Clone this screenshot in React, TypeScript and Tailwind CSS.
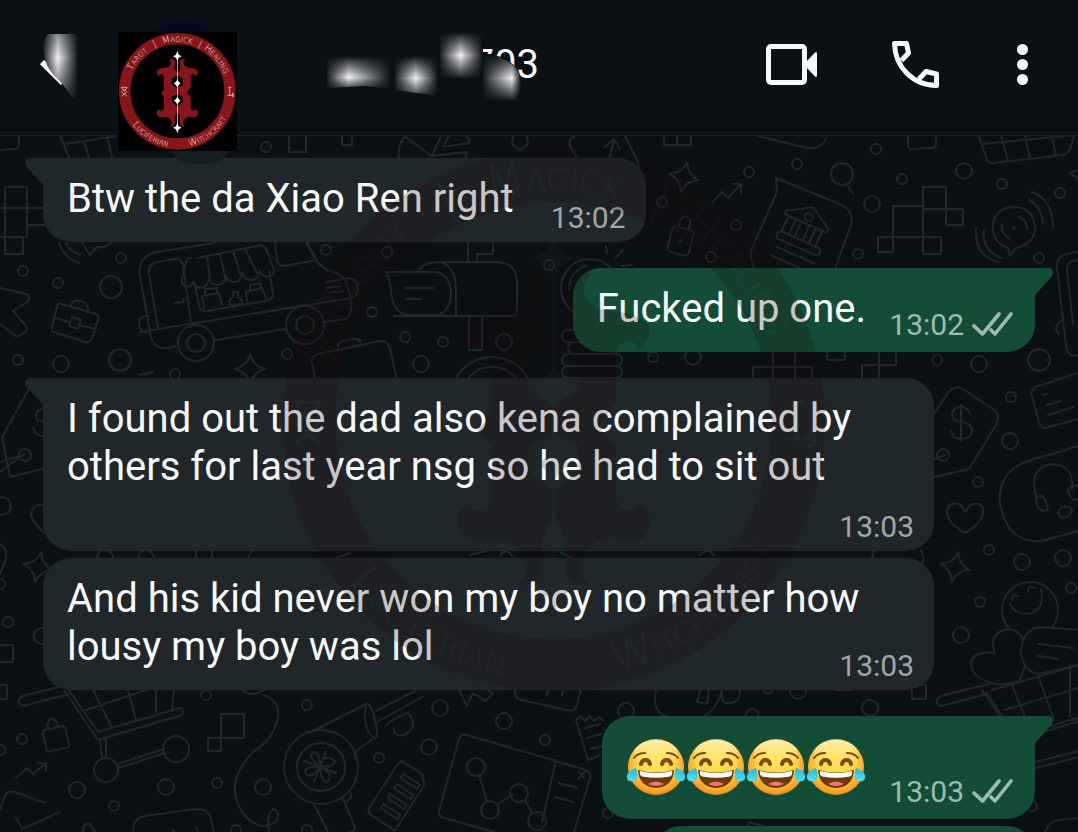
import type { ReactNode } from "react";

type Message = {
  id: number;
  text?: string;
  laughs?: number;
  time: string;
  sent?: boolean;
  tail?: boolean;
  spacing: string;
  room: string;
};

const messages: Message[] = [
  { id: 1, text: "Btw the da Xiao Ren right", time: "13:02", tail: true, spacing: "", room: "pr-28 pb-3" },
  { id: 2, text: "Fucked up one.", time: "13:02", sent: true, tail: true, spacing: "mt-[26px]", room: "pr-[147px] pb-3" },
  {
    id: 3,
    text: "I found out the dad also kena complained by others for last year nsg so he had to sit out",
    time: "13:03",
    tail: true,
    spacing: "mt-[26px]",
    room: "pb-[53px]",
  },
  {
    id: 4,
    text: "And his kid never won my boy no matter how lousy my boy was lol",
    time: "13:03",
    spacing: "mt-[7px]",
    room: "pb-3",
  },
  { id: 5, laughs: 4, time: "13:03", sent: true, tail: true, spacing: "mt-[26px]", room: "pr-[147px] pb-3" },
];

// x, y, radius
const dots = [
  [266, 147, 5], [121, 258, 5], [23, 271, 5], [58, 283, 5], [111, 287, 11], [18, 360, 5], [61, 364, 8],
  [120, 360, 11], [175, 374, 5], [287, 354, 5], [326, 250, 5], [387, 252, 5], [372, 312, 5], [405, 337, 5],
  [443, 342, 5], [421, 364, 8], [504, 342, 8], [520, 141, 8], [749, 172, 5], [797, 164, 5], [662, 202, 5],
  [736, 225, 5], [711, 257, 5], [876, 149, 5], [902, 179, 5], [964, 171, 8], [1002, 184, 5], [1060, 193, 5],
  [872, 204, 8], [858, 254, 5], [1039, 258, 5], [937, 360, 5], [979, 364, 8], [1039, 360, 11], [549, 265, 5],
  [653, 357, 5], [693, 357, 8], [1011, 397, 5], [1010, 441, 8], [978, 482, 5], [989, 550, 5], [1022, 562, 8],
  [1063, 558, 8], [1071, 588, 5], [980, 602, 5], [961, 635, 8], [870, 708, 8], [2, 506, 9], [8, 622, 5],
  [0, 584, 5], [42, 636, 8], [206, 695, 5], [307, 705, 5], [22, 739, 5], [77, 790, 8], [114, 806, 5],
  [166, 787, 8], [217, 783, 5], [263, 787, 8], [379, 758, 5], [429, 747, 8], [440, 708, 8], [504, 721, 8],
  [545, 740, 5], [626, 711, 8], [608, 813, 5], [798, 691, 8], [768, 690, 4], [1032, 806, 5], [0, 750, 5],
  [105, 558, 8], [146, 558, 8], [307, 830, 5], [236, 830, 5],
];

const sparkles = [
  "translate(250 369)",
  "translate(684 177) rotate(12)",
  "translate(955 567) rotate(12)",
  "translate(38 567) rotate(12)",
];

function Doodles() {
  return (
    <svg
      className="absolute inset-0 h-full w-full"
      viewBox="0 136 1078 696"
      preserveAspectRatio="xMidYMin slice"
      fill="none"
      stroke="#20262a"
      strokeWidth="2"
      strokeLinecap="round"
      strokeLinejoin="round"
      aria-hidden="true"
    >
      {dots.map(([x, y, r]) => (
        <circle key={`${x}-${y}`} cx={x} cy={y} r={r} />
      ))}
      {sparkles.map(t => (
        <path key={t} transform={t} d="M0-15Q3-3 15 0Q3 3 0 15Q-3 3-15 0Q-3-3 0-15Z" />
      ))}

      {/* top edge */}
      <path d="M19 136v8q0 5-6 5L0 150M60 136l10 23M64 144l54-8M84 142l5 16M107 137l5 20M137 136l5 15" />
      <path d="M289 136v16h17v-16M342 136v9h10v-9M399 158q-2-12 6-22M404 136l28 20 9-20M449 136l-6 11 26-4q2-4-3-7M432 156l34-4v6" />
      <path d="M574 136q-8 6-2 14l5 8M625 136l13 26q2 6-2 10M609 160l5-20M605 147l9-8 6 10M664 136v9h27v-9M677 136v9M758 136l50 12q14 2 18-10M908 136v9q0 4 4 4l20-1q4 0 4-5v-7" />
      <path d="M979 136l8 24q2 4 7 3l68-8q7-1 9-9l3-10M983 144l92-9M1001 136l7 25M1025 136l5 23M1052 136l4 20M1078 170l-9 3 9 5" />

      {/* pixel steps */}
      <path d="M5 187h22v50h-27M5 187v50M0 208h45v17H27M5 237v17h18v-17" />
      <path d="M923 187h23v22h-23zM893 206h30M893 206v31M946 209h17v16h-17zM878 237h15v15h-15zM893 237h48v17h-18v-45" />
      <path d="M753 383v-16h59v16M773 352v31M795 352v31M827 352v8h18v-8M862 378v-13h34v-12M879 352v25" />
      <path d="M221 714h23v24h-23zM208 738h13v13h-13zM0 645h13v17H0M0 685h7v14H0M912 685h14v14h-14zM835 690h16" />

      {/* food truck */}
      <path d="M215 243l-58 9q-20 4-17 24l10 56q2 18 18 16l9-2M215 340l71-11M325 322l21-3q7-4 5-21M140 332l211-34M308 243l8 16q4 9 17 13 12 3 15 16l3 10" />
      <path d="M158 328l-9-54q-1-10 8-12l18-3q7-1 8 7l8 56M174 303l8-1q2 0 2-4M148 316q-12 0-8 12 2 6 8 4M275 243l2 16q1 8 8 7l31-6-10-17" />
      <path d="M197 258l60-12q7-2 10 5l7 19q0 6-6 7-6 0-8-6-2 9-8 9-7 0-9-7-2 8-8 9-7 0-9-6-1 8-8 9-7 0-9-6-2 8-8 9-7 0-8-6-2 5-7 4-5-1-4-6l4-18q1-4 5-4M207 256l3 24M220 254l6 27M233 251l8 25M245 249l12 24M195 284l4 22q1 6 8 5l58-10q8-1 8-8l-4-22" />
      <path d="M204 308l-2-12 17-3 3 12M205 295v-6l12-1v5M230 305q-2-5 3-8v-5h5v5q6 3 4 7zM247 301l-1-9 16-4 4 10M250 290v-5l10-2 1 6M326 282l14-2M327 288l14-2M329 293l14-2M346 278q11 0 12 10 0 9-9 11" />
      <circle cx="196" cy="343" r="18" />
      <circle cx="196" cy="343" r="9" />
      <circle cx="305" cy="325" r="19" />
      <circle cx="305" cy="325" r="9" />

      {/* mailbox and cases */}
      <path d="M386 272h50c20 2 20 41 0 43h-28c-20-2-16-30-19-35zM406 288h27M406 299h16M419 270q5-8 20-8h58q20 1 20 20v29q0 5-5 5H394M440 262q16 4 16 28v26M469 316v34h13v-34M468 243v19M477 262v-8h16v-11" />
      <path d="M316 384l-4-22q-1-6 6-8l62-13q7-1 10 7l7 32M338 350v-5q1-4 10-5 12-4 13 4M58 303l38 11q4 2 2 6l-6 18q-2 5-6 4l-32-10q-3-1-2-5zM71 305q2-6 10-4 8 2 7 9M55 318l14 4M79 325l17 4M72 317l9 3-3 9-9-3z" />
      <path d="M0 288l26 6q6 3 1 8l-14 9 13 15q2 4-2 7l-7 4-17-13" />
      <circle cx="492" cy="398" r="41" />
      <circle cx="492" cy="398" r="31" />
      <path d="M59 243q4 14 20 20M66 243q4 9 14 11M82 243l8 12 7-8q9 1 14-4" />

      {/* bulb and stack of coins */}
      <circle cx="590" cy="288" r="29" />
      <path d="M569 290q0-18 17-24M606 246l1 8M623 250l-7 8M632 265l-10 1" />
      <rect x="562" y="330" width="50" height="12" rx="6" />
      <rect x="568" y="342" width="50" height="12" rx="6" />
      <rect x="562" y="354" width="60" height="12" rx="6" />
      <rect x="562" y="366" width="60" height="12" rx="6" />

      {/* lock, search, bank, signal */}
      <g transform="translate(681 239) rotate(14)">
        <rect x="-11" y="-11" width="22" height="26" rx="4" />
        <path d="M-5-11v-8q5-8 10 0v8" />
        <circle cy="2" r="1" />
      </g>
      <circle cx="842" cy="174" r="11" />
      <path d="M847 184l6 10M712 203l10-11 6 6 13-14M733 184h8v9" />
      <path d="M758 272q-10-10-6-24l25-56-1-14 66 27q12 6 9 20l-16 44" />
      <g transform="translate(803 230) rotate(24)">
        <path d="M-23-11L0-25 23-11v4h-46zM-19-7v17M-11-7v17M-5-7v17M4-7v17M11-7v17M18-7v17M-20 10h42q5 3 0 8h-42q-5-4 0-8zM-18 26h42M-18 36h42" />
        <circle cy="-14" r="4" />
      </g>
      <path d="M1008 248l2 8 6-8q19-4 19-21-2-20-21-20-21 1-21 21 0 14 15 20zM1002 224q-2 9 8 15M1019 217q8 3 8 12M984 230q-2 22 18 28M976 228q-2 28 22 34M1029 200q13 7 14 24M1032 192q21 8 21 36" />
      <circle cx="1014" cy="228" r="1" />
      <path d="M1078 252l-12 2q-10 2-9 14l9 78q2 12 12 9M1078 260q-12 1-11 10l6 54M1062 320q-10 8-3 14" />

      {/* price tag, note, headset */}
      <path d="M934 414l14-21q7-9 15-4l30 20q8 6 3 16l-27 44-35 8M934 459l11-4M970 414q-2-7-9-7-9 0-9 8 0 6 9 7 11 1 11 9 0 8-11 8-9 0-10-9M961 405v36" />
      <circle cx="943" cy="455" r="6" />
      <path d="M1078 373q-1 0-36 12-13 2-10 11l7 26q2 8 10 5l29-8M1042 395l5-1M1046 405l14-4M1048 415l25-8M1078 446l-53 16q-28 12-25 42 8 40 42 37l36-10" />
      <path d="M1037 498q-10-30 15-34 22 1 20 25M1036 498q6-6 10 4 4 9-2 9-7 0-8-13M1068 490q5-8 10-3M1068 490q3 12 10 9M1061 508q10-4 11 3-3 8-11 6-5-4 0-9" />
      <path d="M965 533q-18-10-18-22 3-11 14-6l4 7 5-7q13-4 13 6 0 12-18 22zM30 387L2 437l8 40 33-8M0 462l24-7M0 472l24-18M43 408q-10 4-6 12l6 2M33 428q3 8 10 8M43 505q-10-2-12 10 2 8 13 18" />
      <circle cx="25" cy="455" r="6" />
      <circle cx="1030" cy="610" r="28" />
      <path d="M1010 604q6 12 22 9 13-5 9-24M1012 600q0-7 6-4M1028 592q0-8 7-4" />
      <path
        fill="#0b1014"
        d="M997 684q-24-4-26-20 1-14 24-11-6-16 6-22 14-6 22 8 8 20-4 42-10 4-22 3z"
      />
      <path fill="#0b1014" d="M1082 630l-42-3q-18 3-19 25 2 20 18 22l43-10z" />
      <path d="M1039 644l34 4M1038 656l20 3" />
      <path d="M0 544q10 6 4 20l-4 10M140 375l13-3M196 550v8M212 550v8M248 558l4-8M872 558l2-8M921 550q4 8 1 14" />

      {/* shopping carts */}
      <path d="M75 683l-52 13q-6 3-4 7 3 4 8 2l42-11M64 690l34 50 84-25q2-6-2-7l-82 24-30-43M86 710l66-22M93 690l18 36M128 690l8 30M156 690v22M174 690l-2 20M100 740l2 18M106 738v20M118 768l47-15M117 764l47-15" />
      <circle cx="106" cy="770" r="12" />
      <circle cx="176" cy="749" r="13" />
      <g transform="translate(918 0)">
        <path d="M75 683l-52 13q-6 3-4 7 3 4 8 2l42-11M64 690l34 50 84-25M68 692l30 44 82-24M74 690l86-25M86 710l74-22M93 683l18 43M120 675l16 45M152 665v52M118 768l47-12M117 762l47-12" />
      </g>

      {/* bottom strip */}
      <g transform="translate(55 737) rotate(-12)">
        <rect x="-11" y="-9" width="23" height="22" rx="3" />
        <path d="M-5-9v-5q5-9 10 0v5" />
      </g>
      <path d="M16 778l11-10 6 6 13-11M37 763h9v8M0 810l5-14q2-6 10-4l30 11M16 817l6 12 38-17M83 832q0-10 7-8l5 8M133 832q0-14 12-16l50-7q14 0 16 10l3 13M172 830l2 2M196 827l2 5" />
      <path d="M242 690q8 8 22 0M264 695q22 8 10 34-6 14-20 22-34 34-8 66 14 14 28 6 8-8 0-14-8 2-5 22" />
      <path d="M313 731l53-27q6-2 11 26 1 10-3 8l-17 12q-3 4-2 9M366 704q-4 26 8 34M377 710l38-19M377 722l45-25M386 725q10-8 22-12 12 14-4 22-11 2-10-7M314 804l14 28M343 799l12 28q0 5-6 5M349 790q6 8-4 12" />
      <circle cx="321" cy="767" r="37" />
      <circle cx="321" cy="767" r="24" />
      <path d="M320 767q-14-12-6-15 6 1 6 15 2-14 14-7 4 6-14 7 14 6 8 14-7 3-8-14-8 12-14 7-4-8 14-7M304 761l32 12M326 751l-12 31" />
      <g transform="translate(399 795) rotate(33)">
        <path d="M-16-30h24l8 8v54h-28q-6 0-6-6v-50q0-6 6-6" />
        <path d="M-8-20v5h20v-5zM-8-8v5h20v-5zM-8 4v5h20v-5zM-8 16v5h20v-5z" />
      </g>
      <path d="M459 739q2-6 8-4l116 34q9 3 7 9l-16 54M459 739l-20 72q-1 5 5 7l50 14M556 760l-14 62M559 783l18 5M555 797l18 5M579 772l5 6M585 772l-7 7M479 775l8 26M498 804l14-9M525 800l7 13" />
      <circle cx="476" cy="767" r="9" />
      <circle cx="490" cy="810" r="9" />
      <circle cx="519" cy="793" r="9" />
      <circle cx="537" cy="821" r="9" />
      <path d="M459 690l8 16 6-13 12 8 8-7-5-4M515 690q-1 8 6 10l46 10q8 2 10-5l4-15M548 690l-1 5M563 690l-1 5M576 720l5-4 4 5 5-5 4 5 5-4 5 4M576 720l12 40 12-5M585 728l15-4M587 738l14-4M591 749l10-3" />
      <path d="M656 690q-6 24 16 28 40 10 50-28M700 690l-3 12 10 2 2-14M722 690q-2 12 4 13 14 2 14-13M745 716q3-9 9-7 6 2 4 7M1045 832q5-12 15-12l18-2M745 832l4-10 14 4" />
      <path d="M700 555q8-8 14 0M560 552l12 6M350 553l-14 5M470 555l16-4M500 556q6-10 12 0" />
    </svg>
  );
}

const leftHalf =
  "M0-56L-8-64C-12-72-4-84-8-92C-12-99-20-98-25-94C-18-90-17-82-24-76C-34-66-50-76-62-60C-62-52-58-47-54-46C-52-55-42-53-40-42V-4L-49 6L-40 16V50C-42 60-52 60-56 54C-64 60-63 68-58 75C-48 82-36 72-26 80C-15 87-14 98-23 106C-10 107-4 96-8 84C-8 76-4 68 0 62V46L-16 32V16L0 8V-10L-17-20V-38L0-48Z";
const rightHalf =
  "M0-56L8-64C12-72 4-84 8-92C12-99 20-98 25-94C18-90 17-82 24-76C34-66 50-76 62-60C62-52 58-47 54-46C52-55 42-53 40-42V-12L29 4L40 18V50C42 60 52 60 56 54C64 60 63 68 58 75C48 82 36 72 26 80C15 87 14 98 23 106C10 107 4 96 8 84C8 76 4 68 0 62V46L16 32V16L0 8V-10L17-20V-38L0-48Z";

const topWords = [
  { word: "Tarot", at: "21.7%" },
  { word: "|", at: "35.6%" },
  { word: "Magick", at: "50%" },
  { word: "|", at: "64.4%" },
  { word: "Healing", at: "78.3%" },
];
const bottomWords = [
  { word: "Luciferian", at: "32.5%" },
  { word: "Witchcraft", at: "70.5%" },
];

// Circular seal, shared by the avatar and the large watermark
function Seal({ id, ring, ink, line }: { id: string; ring: string; ink: string; line: string }) {
  return (
    <>
      <circle r="158" fill="none" stroke={ring} strokeWidth="34" />
      <path d={leftHalf} fill={ring} />
      <path d={rightHalf} fill={ring} />
      <g fill={line}>
        <path d="M-1-112h2V112h-2z" />
        <path d="M0-122L4-110 13-105 4-101 0-90-4-101-13-105-4-110Z" />
        <path d="M0-35L5-28 10-24 5-20 0-13-5-20-10-24-5-28Z" />
        <path d="M0 17L5 24 10 28 5 32 0 39-5 32-10 28-5 24Z" />
        <path d="M0 94L4 105 13 109 4 114 0 126-4 114-13 109-4 105Z" />
      </g>
      <defs>
        <path id={`${id}-top`} d="M-149 0A149 149 0 0 1 149 0" />
        <path id={`${id}-bottom`} d="M-168 0A168 168 0 0 0 168 0" />
      </defs>
      <g fill={ink} fontFamily="DejaVu Sans, sans-serif" fontSize="28" fontWeight="200" textAnchor="middle">
        {topWords.map(({ word, at }) => (
          <text key={at} style={{ fontVariant: "small-caps" }}>
            <textPath href={`#${id}-top`} startOffset={at}>
              {word}
            </textPath>
          </text>
        ))}
        {bottomWords.map(({ word, at }) => (
          <text key={at} style={{ fontVariant: "small-caps" }}>
            <textPath href={`#${id}-bottom`} startOffset={at}>
              {word}
            </textPath>
          </text>
        ))}
      </g>
      <g fill="none" stroke={ink} strokeWidth="2">
        <path d="M-168-12h18M-166-12q1 8 7 11 6-3 7-11M-167 1l16 14M-151 1l-16 14M-163-4h8" />
        <path d="M153-12h9M157-12v24M150 12h16V4M162 12q6-8 7 1 0 4-5 3" />
      </g>
    </>
  );
}

function Avatar() {
  return (
    <div className="relative mt-8 ml-10 h-[119px] w-[119px] shrink-0 self-start">
      <svg className="h-full w-full overflow-visible" viewBox="-178 -178 357 357" role="img" aria-label="Profile photo">
        <defs>
          <radialGradient id="halo">
            <stop offset="0.5" stopColor="#05061f" />
            <stop offset="1" stopColor="#05061f" stopOpacity="0" />
          </radialGradient>
        </defs>
        <ellipse cx="20" cy="-172" rx="110" ry="46" fill="url(#halo)" />
        <ellipse cx="68" cy="176" rx="84" ry="44" fill="#171e22" />
        <rect x="-178" y="-178" width="357" height="357" fill="#000" />
        <Seal id="avatar" ring="#87161a" ink="#f0e4e2" line="#fff" />
      </svg>
    </div>
  );
}

type GlowProps = {
  id: string;
  x: number;
  y: number;
  w: number;
  h: number;
  px: number;
  py: number;
  d?: string;
};

// Soft white patch whose brightness falls off both ways from (px, py)
function Glow({ id, x, y, w, h, px, py, d }: GlowProps) {
  return (
    <g>
      <defs>
        <linearGradient id={`${id}-h`}>
          <stop offset="0" stopColor="#fff" stopOpacity="0.05" />
          <stop offset={px} stopColor="#fff" stopOpacity="0.95" />
          <stop offset="1" stopColor="#fff" stopOpacity="0" />
        </linearGradient>
        <linearGradient id={`${id}-v`} x2="0" y2="1">
          <stop offset="0" stopColor="#fff" stopOpacity="0.05" />
          <stop offset={py} stopColor="#fff" />
          <stop offset="1" stopColor="#fff" stopOpacity="0.05" />
        </linearGradient>
        <mask id={`${id}-m`} maskUnits="userSpaceOnUse" x={x} y={y} width={w} height={h}>
          <rect x={x} y={y} width={w} height={h} fill={`url(#${id}-v)`} />
        </mask>
      </defs>
      <g mask={`url(#${id}-m)`}>
        <path d={d ?? `M${x} ${y}h${w}v${h}h${-w}z`} fill={`url(#${id}-h)`} />
      </g>
    </g>
  );
}

function IconButton({ label, children }: { label: string; children: ReactNode }) {
  return (
    <button type="button" aria-label={label} className="shrink-0 text-[#f7f8fa]">
      {children}
    </button>
  );
}

function Header() {
  return (
    <header className="relative z-10 flex h-34 shrink-0 items-center border-b border-[#1d2428] bg-[#0b1014] pr-[50px] pb-[6px] pl-10">
      <IconButton label="Back">
        <svg width="38" height="66" viewBox="0 0 38 66">
          <path d="M2 30L23 51" stroke="currentColor" strokeWidth="6" />
          <path d="M8 2H38V66H32Q25 54 15 44Q8 37 6 30Q-1 14 8 2Z" fill="#0b1014" />
          <Glow id="back" x={0} y={-26} w={38} h={104} px={0.42} py={0.5} d="M8 2H38V66H32Q25 54 15 44Q8 37 6 30Q-1 14 8 2Z" />
        </svg>
      </IconButton>
      <Avatar />
      <div className="relative ml-[90px] w-[212px]">
        <h1 className="text-right text-[40px] leading-[48px] text-[#f7f8fa]">703</h1>
        {/* smudge that hides most of the number */}
        <svg className="absolute -top-2 left-0" width="212" height="68" viewBox="0 0 212 68" aria-hidden="true">
          <path d="M130 0H156V21H163C180 24 194 34 194 48V68H130Z" fill="#0b1014" />
          <Glow id="g1" x={0} y={24} w={64} h={34} px={0.34} py={0.6} d="M0 24H64V56L38 53 0 55Z" />
          <Glow id="g2" x={68} y={24} w={43} h={42} px={0.48} py={0.5} d="M68 24H111V63L68 57Z" />
          <Glow id="g3" x={113} y={0} w={43} h={45} px={0.48} py={0.5} />
          <Glow id="g4" x={156} y={23} w={44} h={44} px={0.76} py={0.5} d="M156 23H168Q194 30 194 50Q194 60 189 67H156Z" />
        </svg>
      </div>
      <div className="ml-auto flex items-center gap-[75px]">
        <IconButton label="Video call">
          <svg width="51" height="41" viewBox="0 0 51 41" fill="none">
            <rect x="2.5" y="2.5" width="36" height="36" rx="2.5" stroke="currentColor" strokeWidth="5" />
            <path d="M40 18L49 8.5Q51 7 51 10V31Q51 34 49 32.5L40 23Z" fill="currentColor" />
          </svg>
        </IconButton>
        <IconButton label="Voice call">
          <svg
            width="50"
            height="48"
            viewBox="0 0 50 48"
            fill="none"
            stroke="currentColor"
            strokeWidth="5"
            strokeLinejoin="round"
          >
            <path d="M9.5 19.5L16.5 12L14.5 2.5H2.5C3 26 21 44.5 44.5 44.5V33L34 30.5L27 38" />
          </svg>
        </IconButton>
        <IconButton label="More options">
          <svg width="11" height="41" viewBox="0 0 11 41" fill="currentColor">
            <circle cx="5.5" cy="5.5" r="5.5" />
            <circle cx="5.5" cy="20.5" r="5.5" />
            <circle cx="5.5" cy="35.5" r="5.5" />
          </svg>
        </IconButton>
      </div>
    </header>
  );
}

function LaughEmoji() {
  return (
    <svg width="60" height="60" viewBox="0 0 60 60" role="img" aria-label="Face with tears of joy">
      <defs>
        <radialGradient id="face" cx="0.5" cy="0.42" r="0.6">
          <stop offset="0" stopColor="#ffe45c" />
          <stop offset="0.6" stopColor="#fdd145" />
          <stop offset="0.85" stopColor="#fba52a" />
          <stop offset="1" stopColor="#e8860f" />
        </radialGradient>
        <linearGradient id="shine" x2="0" y2="1">
          <stop offset="0" stopColor="#fff1b8" />
          <stop offset="1" stopColor="#ffe96a" stopOpacity="0" />
        </linearGradient>
        <linearGradient id="tear" x2="0" y2="1">
          <stop offset="0" stopColor="#2fb4d8" />
          <stop offset="1" stopColor="#4fe0f2" />
        </linearGradient>
      </defs>
      <circle cx="30" cy="30" r="28" fill="url(#face)" />
      <ellipse cx="30" cy="17" rx="22" ry="14" fill="url(#shine)" />
      <g fill="none" stroke="#7a4a10" strokeLinecap="round">
        <path d="M8 21Q12 16 19 16M41 16Q48 16 52 21" strokeWidth="2" />
        <path d="M15 27Q16 23 19.5 23Q23 23 24 27M36 27Q37 23 40.5 23Q44 23 45 27" strokeWidth="4" />
      </g>
      <path d="M12 33Q30 38 48 33Q47 50 30 51Q13 50 12 33Z" fill="#6e3a08" />
      <path d="M14 34Q30 38 46 34Q47 38 44 39.5Q30 42 16 39.5Q13 38 14 34Z" fill="#fff" />
      <path d="M22 47Q30 42 38 47Q30 51 22 47Z" fill="#f0707c" />
      <path d="M10 31Q14 43 7 44.5Q0 45 1 38Q3 33 10 31ZM50 31Q46 43 53 44.5Q60 45 59 38Q57 33 50 31Z" fill="url(#tear)" />
    </svg>
  );
}

function Ticks() {
  return (
    <svg
      width="41"
      height="27"
      viewBox="0 0 41 27"
      fill="none"
      stroke="currentColor"
      strokeWidth="3.6"
      strokeLinecap="round"
      strokeLinejoin="round"
      role="img"
      aria-label="Delivered"
    >
      <path d="M2 14L10.5 22L27 2M19 18L23 22L39 2" />
    </svg>
  );
}

function Tail({ sent }: { sent?: boolean }) {
  return (
    <svg
      className={
        sent
          ? "absolute top-0 -right-[18px] text-[#144d37]"
          : "absolute top-0 -left-[18px] -scale-x-100 text-[#1f272a]"
      }
      width="20"
      height="30"
      viewBox="0 0 20 30"
      fill="currentColor"
      aria-hidden="true"
    >
      <path d="M0 0H15C20 0 21 4 19 8L2 27V30H0Z" />
    </svg>
  );
}

function Bubble({ message }: { message: Message }) {
  const { text, laughs, time, sent, tail, spacing, room } = message;
  const side = sent ? "self-end bg-[#144d37] pr-[22px]" : "self-start bg-[#1f272a] pr-5";
  const corner = !tail ? "" : sent ? "rounded-tr-none" : "rounded-tl-none";

  return (
    <li className={`relative grid max-w-[891px] rounded-[28px] pt-[17px] pb-[7px] pl-6 ${side} ${corner} ${spacing}`}>
      {tail && <Tail sent={sent} />}
      {text ? (
        <p className={`col-start-1 row-start-1 text-[40px] leading-[48px] text-[#f7f8fa] ${room}`}>{text}</p>
      ) : (
        <p className={`col-start-1 row-start-1 flex h-[79px] items-center ${room}`}>
          {Array.from({ length: laughs ?? 0 }, (_, i) => (
            <LaughEmoji key={i} />
          ))}
        </p>
      )}
      <div
        className={`col-start-1 row-start-1 flex items-center gap-2 self-end justify-self-end text-[30px] ${
          sent ? "leading-10 text-[#9dbbae]" : "leading-[34px] text-[#a2a6a8]"
        }`}
      >
        <time>{time}</time>
        {sent && <Ticks />}
      </div>
    </li>
  );
}

export default function App() {
  return (
    <div className="relative flex h-screen flex-col overflow-hidden bg-[#0b1014] font-[Roboto,sans-serif]">
      <Header />
      <main className="relative flex-1 overflow-hidden px-[43px] pt-[22px]">
        <Doodles />
        <ul className="relative flex flex-col">
          {messages.map(message => (
            <Bubble key={message.id} message={message} />
          ))}
          <li className="mt-[7px] h-21 w-[382px] self-end rounded-[28px] bg-[#144d37]" aria-hidden="true" />
        </ul>
      </main>
      <svg
        className="pointer-events-none absolute top-[145px] left-[278px]"
        width="553"
        height="553"
        viewBox="-178 -178 357 357"
        aria-hidden="true"
      >
        <g opacity="0.2">
          <Seal id="watermark" ring="#200808" ink="#222f36" line="#222c30" />
        </g>
      </svg>
    </div>
  );
}
